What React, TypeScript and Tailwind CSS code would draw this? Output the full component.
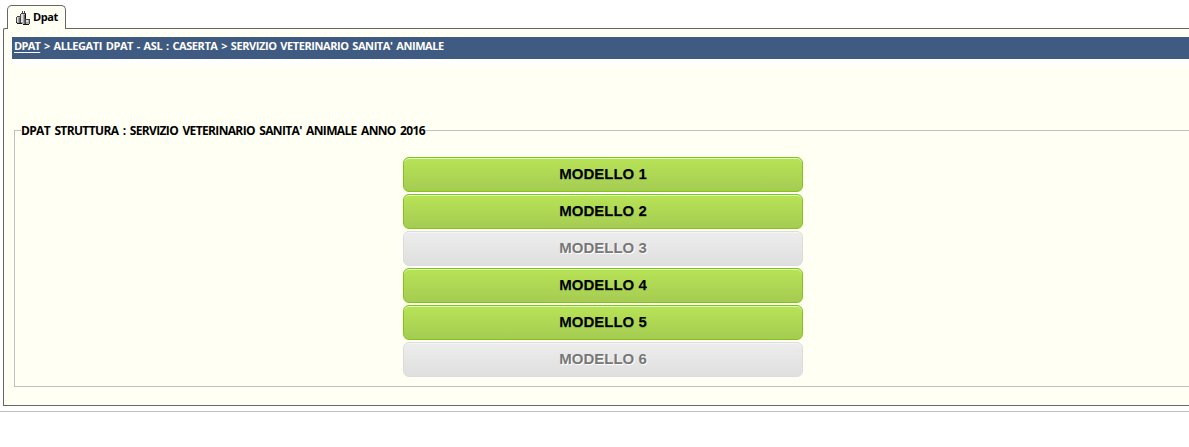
const models = [
  { name: 'MODELLO 1', enabled: true },
  { name: 'MODELLO 2', enabled: true },
  { name: 'MODELLO 3', enabled: false },
  { name: 'MODELLO 4', enabled: true },
  { name: 'MODELLO 5', enabled: true },
  { name: 'MODELLO 6', enabled: false },
];

const enabledStyle =
  'border-[#83c41a] bg-linear-to-b from-[#b8e356] to-[#a5cc52] text-black shadow-[inset_0_1px_0_0_#d9fbbe] [text-shadow:0_1px_0_#86ae47]';
const disabledStyle =
  'border-[#dcdcdc] bg-linear-to-b from-[#ededed] to-[#dfdfdf] text-[#777777] shadow-[inset_0_1px_0_0_#f5f5f5] [text-shadow:1px_1px_0_#ffffff]';

function BuildingsIcon() {
  return (
    <svg width="15" height="16" viewBox="0 0 15 16" shapeRendering="crispEdges" className="shrink-0">
      <path d="M1 7h1V6h3V4h1V3h1V1h1v2h1V1h1v2h1v6h4v5h-1v1H8v-1H2v-1H1z" fill="#444" />
      <path d="M2 7h3v6H2zM6 4h4v10H6zM11 10h3v4h-3z" fill="#a8a8a8" />
      <path d="M2 7h1v5H2zM6 4h2v8H6zM11 10h2v2h-2z" fill="#dedede" />
      <path d="M4 8h1v5H4zM9 5h1v9H9z" fill="#666" />
      <path d="M1 12h1v1H1zM2 13h5v1H2zM8 14h6v1H8zM10 4h1v5h-1z" fill="#111" />
    </svg>
  );
}

export default function App() {
  return (
    <div className="h-[447px] w-full overflow-hidden bg-white pt-[5px] font-['Open_Sans',sans-serif]">
      <div className="relative z-10 ml-[7px] flex h-6 w-[59px] items-start rounded-t-[5px] border border-b-0 border-[#666666] bg-[#fffff3] pt-[4px] pl-[7px]">
        <BuildingsIcon />
        <span className="ml-[3px] text-[11px] leading-[14px] font-bold tracking-[-0.4px] text-black">Dpat</span>
      </div>
      <main className="-mt-px ml-[3px] h-[378px] rounded-tl-[2px] border border-r-0 border-[#666666] bg-[#fffff3] pt-2 pl-2">
        <nav className="h-[22px] bg-[#405b81] pl-[2px] text-[11px] leading-[18px] font-bold whitespace-nowrap text-white">
          <span className="inline-block tracking-[-0.42px] [word-spacing:1.3px]">
            <a className="tracking-[-0.7px] underline underline-offset-2">DPAT</a>
            {" > ALLEGATI DPAT - ASL : CASERTA > SERVIZIO VETERINARIO SANITA' ANIMALE"}
          </span>
        </nav>
        <div className="h-[6px] bg-white" />
        <fieldset className="mt-[58px] ml-[2px] h-[264px] border border-r-0 border-[#c0c0c0] pl-[6px]">
          <legend className="h-[15px] w-[405px] text-[12px] leading-[15px] font-bold tracking-[-0.65px] whitespace-nowrap text-black [word-spacing:1.9px]">
            DPAT STRUTTURA : SERVIZIO VETERINARIO SANITA' ANIMALE ANNO 2016
          </legend>
          <div className="mt-[19px] ml-[382px] flex w-[400px] flex-col gap-[2px]">
            {models.map((model) => (
              <button
                key={model.name}
                disabled={!model.enabled}
                className={`h-[35px] rounded-[6px] border pb-[3px] font-['Liberation_Sans',sans-serif] text-[15px] leading-none font-bold ${
                  model.enabled ? enabledStyle : disabledStyle
                }`}
              >
                {model.name}
              </button>
            ))}
          </div>
        </fieldset>
      </main>
      <hr className="mt-[5px] border-[#c0c0c0]" />
    </div>
  );
}
